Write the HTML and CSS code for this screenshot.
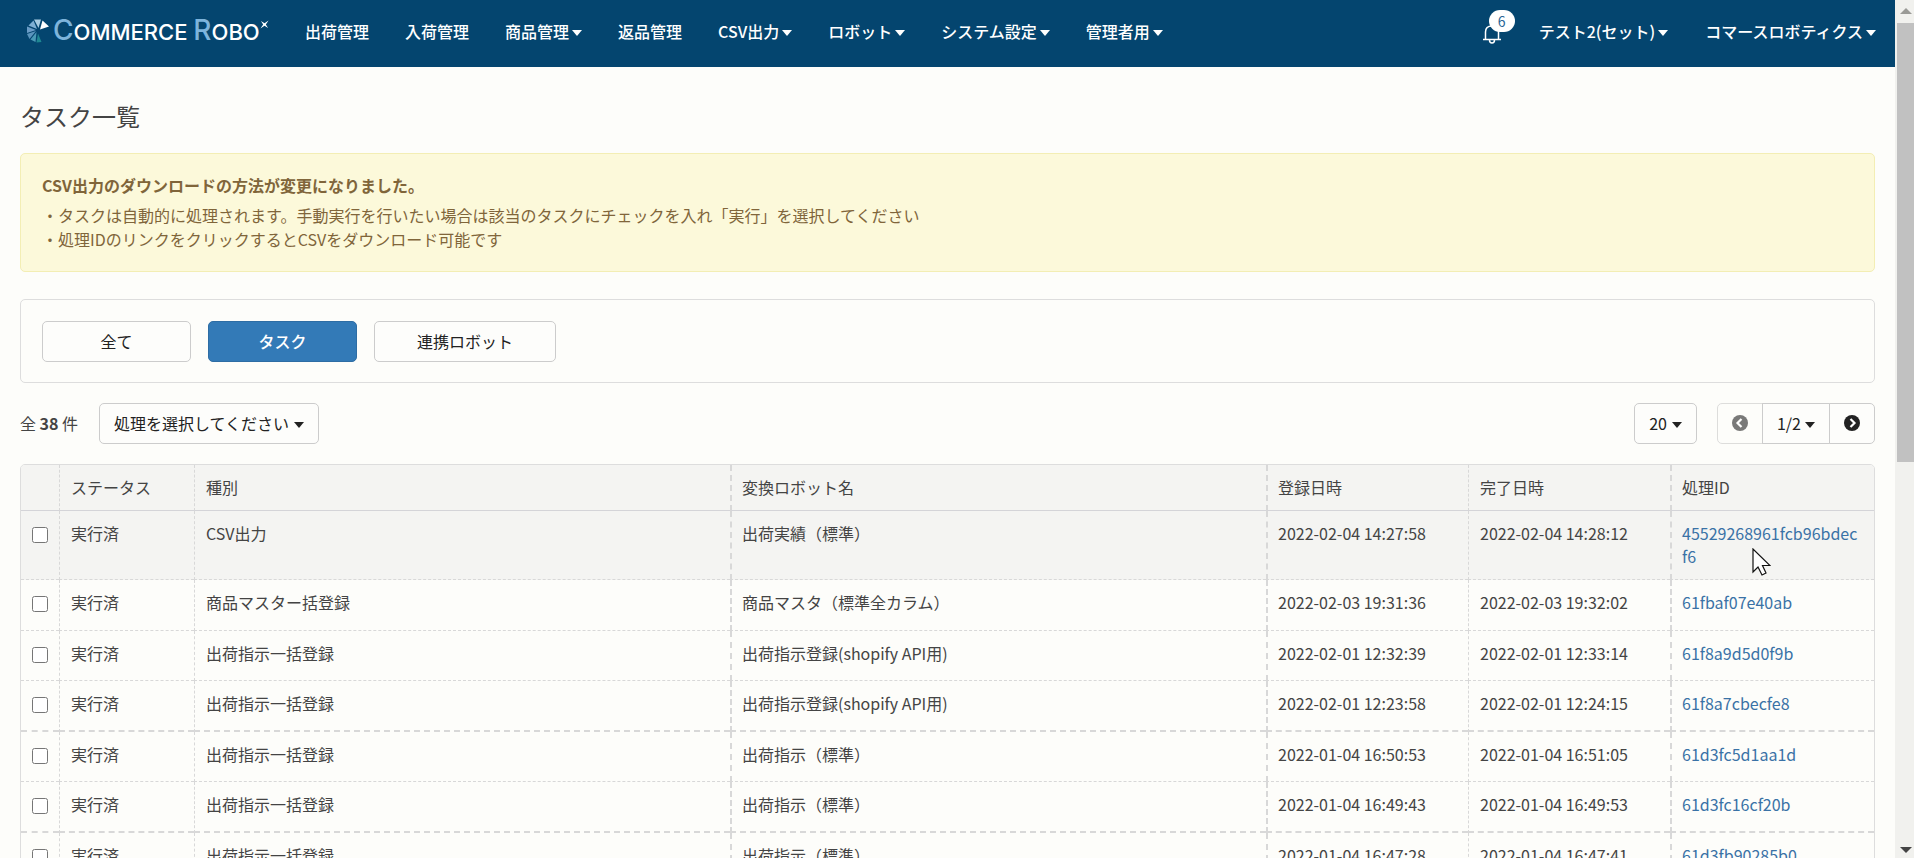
FILE: index.html
```html
<!DOCTYPE html>
<html lang="ja">
<head>
    <meta charset="UTF-8">
    <meta name="viewport" content="width=device-width, initial-scale=1.0">
    <title>タスク一覧 - COMMERCE ROBO</title>
    <link rel="stylesheet" href="styles.css">
</head>
<body>
    <div class="page">
        <header class="navbar">
            <a href="#" class="brand">
                <svg class="brand-mark" viewBox="0 0 22 24" width="22" height="24">
                    <path d="M15.500 1.500 L22 7.500 L13 10.500 Z" fill="#fff"/>
                    <path d="M7 0.500 H14 L11.500 9 Z" fill="#a9cde2"/>
                    <path d="M1.500 6.500 L6.500 1.500 L10 10 Z" fill="#7fb0d4"/>
                    <path d="M0 7.500 L9 11 L0 14 Z" fill="#6a9cc6"/>
                    <path d="M0 15 L9 12 L2.500 20 Z" fill="#5a94bc"/>
                    <path d="M3.500 20.500 L9.500 13 L8.500 23 Z" fill="#4a9ab6"/>
                    <path d="M9.500 23.500 L11 14.500 L14.500 23 Z" fill="#1f8792"/>
                </svg>
                <span class="brand-text"><span class="brand-cap">C</span>OMMERCE <span class="brand-cap">R</span>OBO</span>
                <svg class="brand-star" viewBox="0 0 10 10" width="9" height="9">
                    <path d="M1 1 L5 3.500 L9.500 0.500 L6.500 5 L9 9 L5 6.500 L0.500 9.500 L3.500 5 Z" fill="#fff"/>
                </svg>
            </a>
            <nav class="nav-menu">
                <a href="#">出荷管理</a>
                <a href="#">入荷管理</a>
                <a href="#">商品管理<i class="caret"></i></a>
                <a href="#">返品管理</a>
                <a href="#">CSV出力<i class="caret"></i></a>
                <a href="#">ロボット<i class="caret"></i></a>
                <a href="#">システム設定<i class="caret"></i></a>
                <a href="#">管理者用<i class="caret"></i></a>
            </nav>
            <nav class="nav-menu nav-right">
                <a href="#" class="bell" aria-label="お知らせ">
                    <svg viewBox="0 0 20 20" width="20" height="20" fill="none" stroke="#fff" stroke-width="1.500">
                        <path d="M1 15.500 H19 M3.500 15 V8 C3.500 4 6 2 10 2 C14 2 16.500 4 16.500 8 V15 M7.500 16 C7.500 20 12.500 20 12.500 16 M10 0 V2"/>
                    </svg>
                    <span class="badge">6</span>
                </a>
                <a href="#">テスト2(セット)<i class="caret"></i></a>
                <a href="#">コマースロボティクス<i class="caret"></i></a>
            </nav>
        </header>

        <main class="container">
            <h1>タスク一覧</h1>

            <div class="alert">
                <strong>CSV出力のダウンロードの方法が変更になりました。</strong>
                <p>・タスクは自動的に処理されます。手動実行を行いたい場合は該当のタスクにチェックを入れ「実行」を選択してください</p>
                <p>・処理IDのリンクをクリックするとCSVをダウンロード可能です</p>
            </div>

            <div class="panel">
                <button type="button" class="btn tab">全て</button>
                <button type="button" class="btn tab active">タスク</button>
                <button type="button" class="btn tab">連携ロボット</button>
            </div>

            <div class="toolbar">
                <div class="total">全 <b>38</b> 件</div>
                <button type="button" class="btn">処理を選択してください<i class="caret"></i></button>
                <button type="button" class="btn per-page">20<i class="caret"></i></button>
                <div class="pager">
                    <button type="button" class="btn" disabled aria-label="前へ">
                        <svg viewBox="0 0 16 16" width="16" height="16"><circle cx="8" cy="8" r="8" fill="#333"/><path d="M9.500 4 L5.500 8 L9.500 12" fill="none" stroke="#fff" stroke-width="2.200"/></svg>
                    </button>
                    <button type="button" class="btn">1/2<i class="caret"></i></button>
                    <button type="button" class="btn" aria-label="次へ">
                        <svg viewBox="0 0 16 16" width="16" height="16"><circle cx="8" cy="8" r="8" fill="#222"/><path d="M6.500 4 L10.500 8 L6.500 12" fill="none" stroke="#fff" stroke-width="2.200"/></svg>
                    </button>
                </div>
            </div>

            <div class="table-wrap">
                <table>
                    <colgroup>
                        <col class="col-check">
                        <col class="col-status">
                        <col>
                        <col>
                        <col class="col-date">
                        <col class="col-date">
                        <col class="col-id">
                    </colgroup>
                    <thead>
                        <tr>
                            <th></th>
                            <th>ステータス</th>
                            <th>種別</th>
                            <th>変換ロボット名</th>
                            <th>登録日時</th>
                            <th>完了日時</th>
                            <th>処理ID</th>
                        </tr>
                    </thead>
                    <tbody>
                        <tr class="hover">
                            <td><input type="checkbox" aria-label="選択"></td>
                            <td>実行済</td>
                            <td>CSV出力</td>
                            <td>出荷実績（標準）</td>
                            <td>2022-02-04 14:27:58</td>
                            <td>2022-02-04 14:28:12</td>
                            <td><a href="#">45529268961fcb96bdecf6</a></td>
                        </tr>
                        <tr>
                            <td><input type="checkbox" aria-label="選択"></td>
                            <td>実行済</td>
                            <td>商品マスター括登録</td>
                            <td>商品マスタ（標準全カラム）</td>
                            <td>2022-02-03 19:31:36</td>
                            <td>2022-02-03 19:32:02</td>
                            <td><a href="#">61fbaf07e40ab</a></td>
                        </tr>
                        <tr>
                            <td><input type="checkbox" aria-label="選択"></td>
                            <td>実行済</td>
                            <td>出荷指示一括登録</td>
                            <td>出荷指示登録(shopify API用)</td>
                            <td>2022-02-01 12:32:39</td>
                            <td>2022-02-01 12:33:14</td>
                            <td><a href="#">61f8a9d5d0f9b</a></td>
                        </tr>
                        <tr>
                            <td><input type="checkbox" aria-label="選択"></td>
                            <td>実行済</td>
                            <td>出荷指示一括登録</td>
                            <td>出荷指示登録(shopify API用)</td>
                            <td>2022-02-01 12:23:58</td>
                            <td>2022-02-01 12:24:15</td>
                            <td><a href="#">61f8a7cbecfe8</a></td>
                        </tr>
                        <tr>
                            <td><input type="checkbox" aria-label="選択"></td>
                            <td>実行済</td>
                            <td>出荷指示一括登録</td>
                            <td>出荷指示（標準）</td>
                            <td>2022-01-04 16:50:53</td>
                            <td>2022-01-04 16:51:05</td>
                            <td><a href="#">61d3fc5d1aa1d</a></td>
                        </tr>
                        <tr>
                            <td><input type="checkbox" aria-label="選択"></td>
                            <td>実行済</td>
                            <td>出荷指示一括登録</td>
                            <td>出荷指示（標準）</td>
                            <td>2022-01-04 16:49:43</td>
                            <td>2022-01-04 16:49:53</td>
                            <td><a href="#">61d3fc16cf20b</a></td>
                        </tr>
                        <tr>
                            <td><input type="checkbox" aria-label="選択"></td>
                            <td>実行済</td>
                            <td>出荷指示一括登録</td>
                            <td>出荷指示（標準）</td>
                            <td>2022-01-04 16:47:28</td>
                            <td>2022-01-04 16:47:41</td>
                            <td><a href="#">61d3fb90285b0</a></td>
                        </tr>
                    </tbody>
                </table>
            </div>
        </main>
    </div>

    <div class="scrollbar">
        <span class="arrow arrow-up"></span>
        <span class="thumb"></span>
        <span class="arrow arrow-down"></span>
    </div>

    <svg class="cursor" viewBox="0 0 19 28" width="19" height="28">
        <path d="M1 1 V24 L6 19 L10 27 L14 25 L10.500 17.500 H18 Z" fill="#fff" stroke="#111" stroke-width="1.200"/>
    </svg>
</body>
</html>
```

FILE: styles.css
```css
* {
    box-sizing: border-box;
}

body {
    margin: 0;
    display: flex;
    height: 100vh;
    overflow: hidden;
    background-color: #fdfdfa;
    color: #444;
    font-family: "Noto Sans CJK JP", "Noto Sans", sans-serif;
    font-size: 16px;
    line-height: 23px;
}

a {
    color: #3a72a6;
    text-decoration: none;
}

.page {
    flex: 1;
    min-width: 0;
    overflow: hidden;
}

/* header */
.navbar {
    display: flex;
    align-items: center;
    height: 67px;
    padding: 0 0 5px 27px;
    background-color: #04456f;
}

.brand {
    display: flex;
    align-items: center;
    width: 260px;
    color: #fff;
}

.brand-text {
    margin-left: 4px;
    font-family: Inter, sans-serif;
    font-size: 22px;
    font-weight: 500;
    white-space: nowrap;
}

.brand-cap {
    color: #7db4dc;
    font-size: 28px;
}

.brand-star {
    margin-bottom: 14px;
}

.nav-menu {
    display: flex;
    align-items: center;
}

.nav-menu a {
    padding: 0 18px;
    color: #fff;
    font-weight: 500;
    white-space: nowrap;
}

.nav-right {
    margin-left: auto;
}

.nav-right a {
    padding: 0 19px 0 18px;
}

.caret {
    display: inline-block;
    margin-left: 3px;
    border-top: 6px solid;
    border-left: 5px solid transparent;
    border-right: 5px solid transparent;
    vertical-align: 2px;
}

.nav-menu .bell {
    position: relative;
    margin-top: 6px;
    padding: 0 19px 0 0;
    line-height: 0;
}

.badge {
    position: absolute;
    top: -14px;
    left: 7px;
    width: 26px;
    border-radius: 11px;
    background-color: #fff;
    color: #2a6596;
    font-size: 14px;
    font-weight: 400;
    line-height: 22px;
    text-align: center;
}

/* content */
.container {
    padding: 0 20px;
}

h1 {
    margin: 31px 0 19px;
    font-size: 24px;
    font-weight: 400;
    line-height: 36px;
}

.alert {
    margin-bottom: 27px;
    padding: 19px 21px 20px;
    border: 1px solid #f3eeb4;
    border-radius: 5px;
    background-color: #fcf9da;
    color: #80653a;
    line-height: 24px;
}

.alert strong {
    display: block;
    margin-bottom: 6px;
}

.alert p {
    margin: 0;
}

.panel {
    display: flex;
    gap: 17px;
    margin-bottom: 20px;
    padding: 21px 21px 20px;
    border: 1px solid #ddd;
    border-radius: 5px;
}

.btn {
    height: 41px;
    padding: 0 14px 2px;
    border: 1px solid #ccc;
    border-radius: 5px;
    background-color: #fdfdfb;
    color: #222;
    font-family: inherit;
    font-size: 16px;
    white-space: nowrap;
    cursor: pointer;
}

.btn .caret {
    margin-left: 5px;
}

.tab {
    min-width: 149px;
    padding: 0 42px 2px;
}

.tab.active {
    border-color: #2e6da4;
    background-color: #337ab7;
    color: #fff;
    font-weight: 500;
}

.toolbar {
    display: flex;
    align-items: center;
    margin-bottom: 20px;
}

.total {
    width: 79px;
}

.per-page {
    margin-left: auto;
    margin-right: 20px;
}

.pager {
    display: flex;
}

.pager .btn {
    border-radius: 0;
}

.pager .btn + .btn {
    margin-left: -1px;
}

.pager .btn:first-child {
    border-radius: 5px 0 0 5px;
}

.pager .btn:last-child {
    border-radius: 0 5px 5px 0;
}

.pager .caret {
    margin-left: 4px;
}

.pager svg {
    display: block;
}

.btn:disabled {
    opacity: 0.650;
}

/* table */
.table-wrap {
    border: 1px solid #ddd;
    border-radius: 5px 5px 0 0;
    overflow: hidden;
}

table {
    width: 100%;
    border-collapse: separate;
    border-spacing: 0;
    table-layout: fixed;
}

.col-check {
    width: 38px;
}

.col-status {
    width: 135px;
}

.col-date {
    width: 202px;
}

.col-id {
    width: 204px;
}

th, td {
    padding: 11px;
    border-bottom: 1px dashed #d8d8d8;
    border-left: 1px dashed #d8d8d8;
    text-align: left;
    vertical-align: top;
    font-weight: 400;
    overflow-wrap: anywhere;
}

th {
    border-bottom: 1px solid #d4d4d8;
}

th:first-child, td:first-child {
    border-left: 0;
}

th:nth-child(4), td:nth-child(4),
th:nth-child(5), td:nth-child(5),
th:nth-child(7), td:nth-child(7) {
    padding-left: 10px;
    border-left-width: 2px;
}

td:last-child {
    padding-right: 14px;
}

thead, .hover {
    background-color: #f4f4f2;
}

tbody tr {
    height: 50px;
}

tbody tr:nth-child(even) {
    height: 51px;
}

tbody tr:nth-child(2n+4) td {
    border-bottom-width: 2px;
}

input[type="checkbox"] {
    display: block;
    width: 16px;
    height: 16px;
    margin: 5px 0 0;
}

/* window scrollbar */
.scrollbar {
    display: flex;
    flex-direction: column;
    align-items: center;
    width: 19px;
    padding: 8px 0 5px 2px;
    background-color: #f1f1ee;
}

.arrow {
    border-left: 6px solid transparent;
    border-right: 6px solid transparent;
}

.arrow-up {
    border-bottom: 6px solid #9a9a96;
}

.arrow-down {
    margin-top: auto;
    border-top: 6px solid #444;
}

.thumb {
    width: 100%;
    height: 52%;
    margin-top: 9px;
    background-color: #c1c1c1;
}

.cursor {
    position: absolute;
    top: 548px;
    left: 1752px;
}
```
